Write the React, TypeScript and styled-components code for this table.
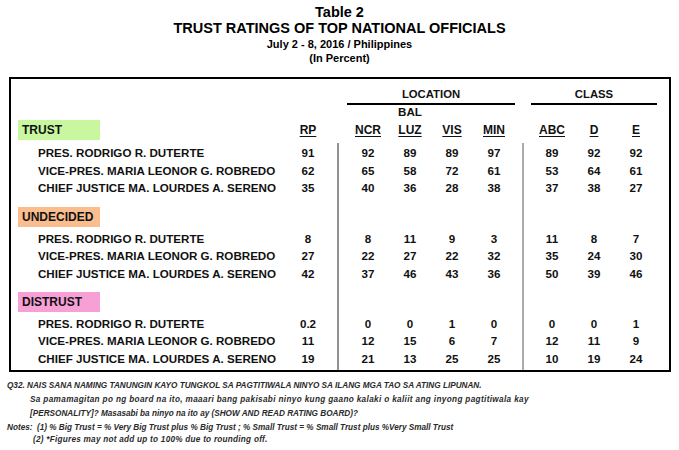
import React from 'react';
import styled, { createGlobalStyle } from 'styled-components';

// name | RP | gap | NCR BAL-LUZ VIS MIN | gap | ABC D E
const COLS = '270px 40px 19px 42px 42px 42px 42px 16px 42px 42px 42px';
const VALUE_COLS = [2, 4, 5, 6, 7, 9, 10, 11];

const GlobalStyle = createGlobalStyle`
  html, body {
    margin: 0;
    padding: 0;
    background: #fff;
  }
  body {
    font-family: 'Liberation Sans', Arial, sans-serif;
    color: #111;
    overflow: hidden;
  }
`;

const Page = styled.div`
  width: 679px;
  height: 450px;
  padding-top: 4px;
  box-sizing: border-box;
`;

const Heading = styled.header`
  text-align: center;
  font-weight: bold;
  color: #000;
`;

const Title = styled.div`
  font-size: 14.5px;
  line-height: 16px;
`;

const SubTitle = styled.div<{ $lh: number; $top?: number }>`
  font-size: 11px;
  line-height: ${(p) => p.$lh}px;
  margin-top: ${(p) => p.$top ?? 0}px;
`;

const Box = styled.section`
  margin: 12px 8px 0 9px;
  border: 2px solid #000;
  padding: 8px 12px 0 7px;
`;

const GridRow = styled.div`
  display: grid;
  grid-template-columns: ${COLS};
  font-weight: bold;
`;

const GroupRow = styled(GridRow)`
  font-size: 11.3px;
  line-height: 14px;
`;

const GroupTitle = styled.div<{ $col: string }>`
  grid-column: ${(p) => p.$col};
  text-align: center;
  padding-bottom: 2px;
  border-bottom: 2px solid #000;
`;

const SubGroupRow = styled(GridRow)`
  font-size: 11.6px;
  line-height: 14px;
`;

const SubGroup = styled.div<{ $col: number }>`
  grid-column: ${(p) => p.$col};
  text-align: center;
`;

const HeaderRow = styled(GridRow)`
  height: 21px;
  align-items: center;
  font-size: 12px;
`;

const ColHead = styled.div<{ $col: number }>`
  grid-column: ${(p) => p.$col};
  text-align: center;
  text-decoration: underline;
  text-decoration-thickness: 1px;
  text-underline-offset: 2px;
`;

const Label = styled.div<{ $bg: string }>`
  grid-column: 1;
  width: 82px;
  height: 20px;
  box-sizing: border-box;
  padding-left: 4px;
  line-height: 20px;
  font-size: 12px;
  font-weight: bold;
  background: ${(p) => p.$bg};
`;

const HeaderLabel = styled(Label)`
  align-self: end;
`;

const SectionLabel = styled(Label)`
  align-self: start;
`;

const Body = styled.div`
  margin-top: 3px;
  display: flex;
  flex-direction: column;
`;

const SpacerRow = styled(GridRow)<{ $h: number }>`
  height: ${(p) => p.$h}px;
`;

const LabelRow = styled(GridRow)`
  height: 22.25px;
`;

const DataRow = styled(GridRow)`
  height: 17.5px;
  align-items: center;
  font-size: 11.6px;
`;

const Divider = styled.div<{ $col: number; $color: string }>`
  grid-column: ${(p) => p.$col};
  grid-row: 1;
  align-self: stretch;
  justify-self: center;
  width: 2px;
  background-color: ${(p) => p.$color};
`;

const Name = styled.div`
  grid-column: 1;
  grid-row: 1;
  padding-left: 20px;
  white-space: nowrap;
`;

const Value = styled.div<{ $col: number }>`
  grid-column: ${(p) => p.$col};
  grid-row: 1;
  text-align: center;
`;

const Footer = styled.footer`
  padding-left: 7px;
  font-size: 8.2px;
  font-weight: bold;
  font-style: italic;
  color: #2a2a2a;
  white-space: nowrap;
`;

const Question = styled.div`
  margin-top: 7px;
  line-height: 14px;
`;

const Indent = styled.div<{ $pad: number; $ls?: number }>`
  padding-left: ${(p) => p.$pad}px;
  letter-spacing: ${(p) => p.$ls ?? 0}px;
`;

const Notes = styled.div`
  margin-top: 1px;
  line-height: 12px;
  white-space: pre;
`;

interface IRow {
  name: string;
  values: string[];
}

interface ISection {
  label: string;
  color: string;
  rows: IRow[];
}

const DUTERTE = 'PRES. RODRIGO R. DUTERTE';
const ROBREDO = 'VICE-PRES. MARIA LEONOR G. ROBREDO';
const SERENO = 'CHIEF JUSTICE MA. LOURDES A. SERENO';

const sections: ISection[] = [
  {
    label: 'TRUST',
    color: '#c8f7a0',
    rows: [
      { name: DUTERTE, values: ['91', '92', '89', '89', '97', '89', '92', '92'] },
      { name: ROBREDO, values: ['62', '65', '58', '72', '61', '53', '64', '61'] },
      { name: SERENO, values: ['35', '40', '36', '28', '38', '37', '38', '27'] },
    ],
  },
  {
    label: 'UNDECIDED',
    color: '#f9bd8e',
    rows: [
      { name: DUTERTE, values: ['8', '8', '11', '9', '3', '11', '8', '7'] },
      { name: ROBREDO, values: ['27', '22', '27', '22', '32', '35', '24', '30'] },
      { name: SERENO, values: ['42', '37', '46', '43', '36', '50', '39', '46'] },
    ],
  },
  {
    label: 'DISTRUST',
    color: '#f7a0d6',
    rows: [
      { name: DUTERTE, values: ['0.2', '0', '0', '1', '0', '0', '0', '1'] },
      { name: ROBREDO, values: ['11', '12', '15', '6', '7', '12', '11', '9'] },
      { name: SERENO, values: ['19', '21', '13', '25', '25', '10', '19', '24'] },
    ],
  },
];

const headers = ['RP', 'NCR', 'LUZ', 'VIS', 'MIN', 'ABC', 'D', 'E'];

// grey rules between RP | LOCATION | CLASS
function Rules() {
  return (
    <>
      <Divider $col={3} $color="#8f9296" />
      <Divider $col={8} $color="#a9acb0" />
    </>
  );
}

function App() {
  const [first, ...rest] = sections;

  const renderRows = (rows: IRow[]) =>
    rows.map((row) => (
      <DataRow key={row.name}>
        <Rules />
        <Name>{row.name}</Name>
        {row.values.map((v, i) => (
          <Value key={i} $col={VALUE_COLS[i]}>
            {v}
          </Value>
        ))}
      </DataRow>
    ));

  return (
    <Page>
      <GlobalStyle />
      <Heading>
        <Title>Table 2</Title>
        <Title>TRUST RATINGS OF TOP NATIONAL OFFICIALS</Title>
        <SubTitle $lh={15} $top={1}>
          July 2 - 8, 2016 / Philippines
        </SubTitle>
        <SubTitle $lh={13}>(In Percent)</SubTitle>
      </Heading>

      <Box>
        <GroupRow>
          <GroupTitle $col="4 / 8">LOCATION</GroupTitle>
          <GroupTitle $col="9 / 12">CLASS</GroupTitle>
        </GroupRow>
        <SubGroupRow>
          <SubGroup $col={5}>BAL</SubGroup>
        </SubGroupRow>
        <HeaderRow>
          <HeaderLabel $bg={first.color}>{first.label}</HeaderLabel>
          {headers.map((h, i) => (
            <ColHead key={h} $col={VALUE_COLS[i]}>
              {h}
            </ColHead>
          ))}
        </HeaderRow>

        <Body>
          <SpacerRow $h={1}>
            <Rules />
          </SpacerRow>
          {renderRows(first.rows)}
          {rest.map((s) => (
            <React.Fragment key={s.label}>
              <SpacerRow $h={10.5}>
                <Rules />
              </SpacerRow>
              <LabelRow>
                <Rules />
                <SectionLabel $bg={s.color}>{s.label}</SectionLabel>
              </LabelRow>
              {renderRows(s.rows)}
            </React.Fragment>
          ))}
          <SpacerRow $h={3}>
            <Rules />
          </SpacerRow>
        </Body>
      </Box>

      <Footer>
        <Question>
          <div>
            Q32. NAIS SANA NAMING TANUNGIN KAYO TUNGKOL SA PAGTITIWALA NINYO SA
            ILANG MGA TAO SA ATING LIPUNAN.
          </div>
          <Indent $pad={23} $ls={0.35}>
            Sa pamamagitan po ng board na ito, maaari bang pakisabi ninyo kung
            gaano kalaki o kaliit ang inyong pagtitiwala kay
          </Indent>
          <Indent $pad={23}>
            [PERSONALITY]? Masasabi ba ninyo na ito ay (SHOW AND READ RATING
            BOARD)?
          </Indent>
        </Question>
        <Notes>
          <div>
            {'Notes:  (1) % Big Trust = % Very Big Trust plus % Big Trust ; % Small Trust = % Small Trust plus %Very Small Trust'}
          </div>
          <Indent $pad={26} $ls={0.25}>
            (2) *Figures may not add up to 100% due to rounding off.
          </Indent>
        </Notes>
      </Footer>
    </Page>
  );
}

export default App;
